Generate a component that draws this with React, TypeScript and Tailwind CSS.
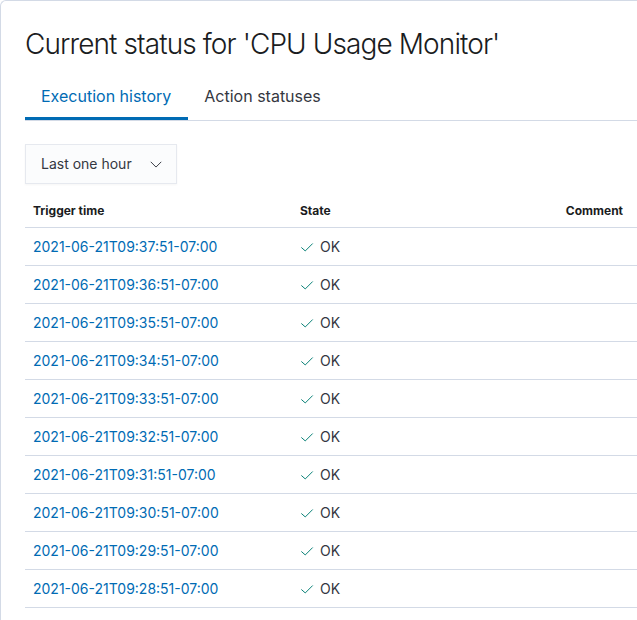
import React from "react";

const times = [
  "2021-06-21T09:37:51-07:00",
  "2021-06-21T09:36:51-07:00",
  "2021-06-21T09:35:51-07:00",
  "2021-06-21T09:34:51-07:00",
  "2021-06-21T09:33:51-07:00",
  "2021-06-21T09:32:51-07:00",
  "2021-06-21T09:31:51-07:00",
  "2021-06-21T09:30:51-07:00",
  "2021-06-21T09:29:51-07:00",
  "2021-06-21T09:28:51-07:00",
];

function Check() {
  return (
    <svg width="14" height="14" viewBox="0 0 16 16" fill="none">
      <path d="M1.5 8.5 L6 12.5 L14.5 4" stroke="#017d73" strokeWidth="1.1" />
    </svg>
  );
}

function Chevron() {
  return (
    <svg width="14" height="14" viewBox="0 0 16 16" fill="none">
      <path d="M2 5.5 L8 11.5 L14 5.5" stroke="#343741" strokeWidth="1.1" />
    </svg>
  );
}

export default function App() {
  return (
    <div className="w-[637px] h-[620px] overflow-hidden bg-white font-['Inter',sans-serif]">
      <div className="w-[700px] h-[700px] border-l border-t border-[#d3dae6] rounded-tl-md p-6 pt-[23px]">
        <h1 className="text-[28px] leading-[40px] font-light text-[#1a1c21] tracking-[-0.9px]">
          Current status for 'CPU Usage Monitor'
        </h1>
        <div className="mt-2 flex border-b border-[#d3dae6]">
          <div className="h-12 pl-4 pr-[17px] flex items-center text-base text-[#006bb4] border-b-[3px] border-[#006bb4] -mb-px pt-[3px]">
            Execution history
          </div>
          <div className="h-12 px-4 flex items-center text-base text-[#343741]">
            Action statuses
          </div>
        </div>
        <div className="mt-[23px] w-[152px] h-10 flex items-center justify-between pl-[15px] pr-[13px] bg-[#fbfcfd] border border-[#e6e9ef] shadow-[0_1px_2px_rgba(0,0,0,0.04)] text-sm text-[#343741]">
          <span>Last one hour</span>
          <Chevron />
        </div>
        <div className="text-sm">
          <div className="flex h-[44px] items-end pb-[8px] border-b border-[#d3dae6] text-xs font-bold text-[#1a1c21]">
            <div className="w-[267px] pl-2">Trigger time</div>
            <div className="w-[200px] pl-2">State</div>
            <div className="w-[131px] text-right">Comment</div>
          </div>
          {times.map((t) => (
            <div key={t} className="flex h-[38px] items-center border-b border-[#d3dae6]">
              <div className="w-[267px] pl-2 text-[#006bb4]">{t}</div>
              <div className="w-[200px] pl-2 flex items-center gap-[6px] text-[#343741]">
                <Check />
                <span>OK</span>
              </div>
              <div className="w-[131px]" />
            </div>
          ))}
        </div>
      </div>
    </div>
  );
}
